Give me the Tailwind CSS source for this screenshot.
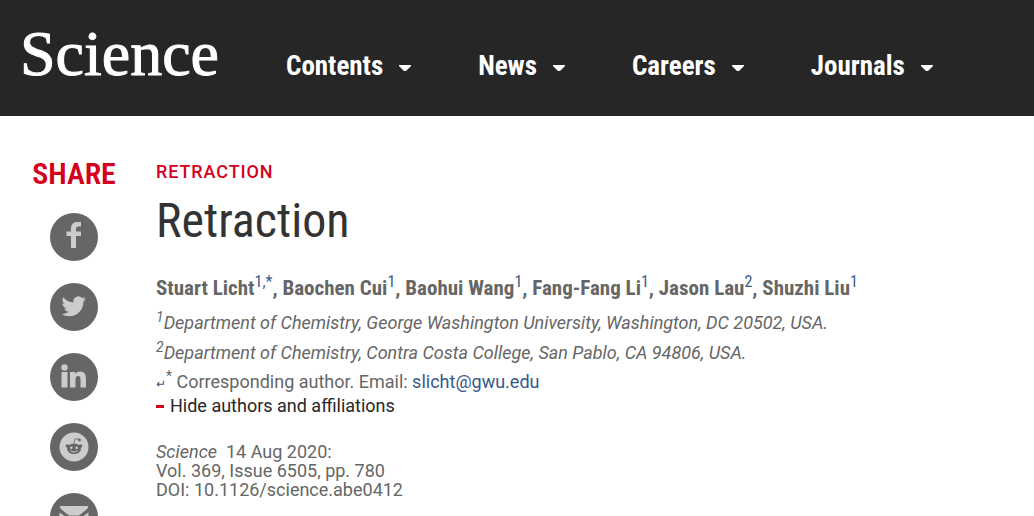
<!DOCTYPE html>
<html lang="en">
<head>
  <meta charset="UTF-8">
  <title>Retraction | Science</title>
  <meta name="viewport" content="width=device-width, initial-scale=1.0">
  <script src="https://cdn.jsdelivr.net/npm/@tailwindcss/browser@4"></script>
</head>
<body class="bg-white font-['Roboto',sans-serif] text-[#666] overflow-x-hidden">

<!-- Header -->
<header class="bg-[#262626] text-white flex items-start pl-5 pb-6">
  <a href="#" class="shrink-0 w-[266px] pt-4 font-['Liberation_Serif',serif] text-[64px] leading-[76px] [-webkit-text-stroke:1px_white]">Science</a>
  <nav class="flex gap-[67px] pt-12 font-['Roboto_Condensed','Roboto',sans-serif] text-[27px] leading-9 font-bold">
    <button class="flex items-center gap-4">Contents
      <svg class="w-3 h-2 mt-1" viewBox="0 0 12 8" fill="currentColor"><path d="M0 1h12v1L7 7H5L0 2z"/></svg>
    </button>
    <button class="flex items-center gap-4">News
      <svg class="w-3 h-2 mt-1" viewBox="0 0 12 8" fill="currentColor"><path d="M0 1h12v1L7 7H5L0 2z"/></svg>
    </button>
    <button class="flex items-center gap-4">Careers
      <svg class="w-3 h-2 mt-1" viewBox="0 0 12 8" fill="currentColor"><path d="M0 1h12v1L7 7H5L0 2z"/></svg>
    </button>
    <button class="flex items-center gap-4">Journals
      <svg class="w-3 h-2 mt-1" viewBox="0 0 12 8" fill="currentColor"><path d="M0 1h12v1L7 7H5L0 2z"/></svg>
    </button>
  </nav>
</header>

<div class="flex">

  <!-- Share links -->
  <aside class="shrink-0 w-[148px] h-[400px] overflow-hidden pt-10 flex flex-col items-center gap-[22px]">
    <h2 class="font-['Roboto_Condensed','Roboto',sans-serif] text-[30px] leading-9 -mb-[1px] font-semibold text-[#d5001c]">SHARE</h2>
    <a href="#" aria-label="Facebook" class="shrink-0 w-12 h-12 rounded-full bg-[#666] text-[#ccc]">
      <svg class="w-12 h-12" viewBox="0 0 48 48" fill="currentColor"><path d="M31 9v4.500h-2.500c-1.800 0-2.500.8-2.500 2.300V18.500h5V23h-5v12h-5V23h-4.500v-4.500H21v-3.100C21 11.200 23.400 9 27.200 9z"/></svg>
    </a>
    <a href="#" aria-label="Twitter" class="shrink-0 w-12 h-12 rounded-full bg-[#666] text-[#ccc]">
      <svg class="w-12 h-12" viewBox="0 0 48 48" fill="currentColor"><path transform="translate(11.500 11) scale(1.020)" d="M23.950 4.570a10 10 0 0 1-2.820.770 4.960 4.960 0 0 0 2.160-2.720c-.95.550-2 .96-3.130 1.180a4.920 4.920 0 0 0-8.380 4.480C7.690 8.090 4.070 6.130 1.640 3.160a4.820 4.820 0 0 0-.67 2.470c0 1.710.87 3.210 2.190 4.100a4.900 4.900 0 0 1-2.230-.62v.06a4.920 4.920 0 0 0 3.950 4.830 5 5 0 0 1-2.210.08 4.940 4.940 0 0 0 4.600 3.420A9.870 9.870 0 0 1 0 19.540a13.990 13.990 0 0 0 7.550 2.210c9.050 0 14-7.500 14-13.980 0-.21 0-.42-.02-.63a9.940 9.940 0 0 0 2.460-2.550z"/></svg>
    </a>
    <a href="#" aria-label="LinkedIn" class="shrink-0 w-12 h-12 rounded-full bg-[#666] text-[#ccc]">
      <svg class="w-12 h-12" viewBox="0 0 48 48" fill="currentColor"><circle cx="14.500" cy="14.500" r="3.200"/><path d="M11.500 19h6v15.500h-6zM20 19h5.200v2.200c.8-1.500 2.300-2.700 4.800-2.700 4.800 0 6 3 6 7.500v8.500h-5.500V27c0-2.500-.4-4-2.400-4-2 0-2.600 1.500-2.600 4v7.500H20z"/></svg>
    </a>
    <a href="#" aria-label="Reddit" class="shrink-0 w-12 h-12 rounded-full bg-[#666] text-[#ccc]">
      <svg class="w-12 h-12" viewBox="0 0 48 48" fill="none">
        <circle cx="24" cy="24" r="14.500" fill="#ccc"/>
        <g fill="#666">
          <ellipse cx="24" cy="25.800" rx="7" ry="5.200"/>
          <circle cx="17.500" cy="23" r="1.800"/><circle cx="30.500" cy="23" r="1.800"/><circle cx="29.500" cy="17" r="1.400"/>
        </g>
        <path d="M24 20.500l1-5 4 1" stroke="#666" stroke-width=".8"/>
        <circle cx="21.300" cy="24.800" r="1.300" fill="#ccc"/><circle cx="26.700" cy="24.800" r="1.300" fill="#ccc"/>
        <path d="M20.800 27.800c2 1.700 4.400 1.700 6.400 0" stroke="#ccc" stroke-linecap="round"/>
      </svg>
    </a>
    <a href="#" aria-label="Email" class="shrink-0 w-12 h-12 rounded-full bg-[#666] text-[#ccc]">
      <svg class="w-12 h-12" viewBox="0 0 48 48" fill="currentColor"><path d="M11 13h26q1.500 0 1 1.500-.5 1.500-3 3.200L29 22.500H19l-6-4.800q-2.500-1.700-3-3.200-.5-1.500 1-1.500zM9.500 19.500L19 26h10l9.500-6.500V35h-29z"/></svg>
    </a>
  </aside>

  <!-- Article -->
  <main class="flex-1 pl-2 pr-6 pt-11 text-[18px]">
    <div class="leading-6 font-medium tracking-wider text-[#d5001c]">RETRACTION</div>
    <h1 class="pt-2 font-['Roboto_Condensed','Roboto',sans-serif] text-[48px] leading-[58px] text-[#333]">Retraction</h1>

    <p class="pt-[22px] font-['Roboto_Condensed','Roboto',sans-serif] text-[21px] leading-8 font-bold">Stuart Licht<sup class="text-[16px] font-normal"><a href="#" class="text-[#37588a]">1</a>,<a href="#" class="text-[#37588a]">*</a></sup>, Baochen Cui<sup class="text-[16px] font-normal"><a href="#" class="text-[#37588a]">1</a></sup>, Baohui Wang<sup class="text-[16px] font-normal"><a href="#" class="text-[#37588a]">1</a></sup>, Fang-Fang Li<sup class="text-[16px] font-normal"><a href="#" class="text-[#37588a]">1</a></sup>, Jason Lau<sup class="text-[16px] font-normal"><a href="#" class="text-[#37588a]">2</a></sup>, Shuzhi Liu<sup class="text-[16px] font-normal"><a href="#" class="text-[#37588a]">1</a></sup></p>

    <address class="pt-1 leading-[30px]">
      <div><sup class="text-[14px]">1</sup>Department of Chemistry, George Washington University, Washington, DC 20502, USA.</div>
      <div><sup class="text-[14px]">2</sup>Department of Chemistry, Contra Costa College, San Pablo, CA 94806, USA.</div>
    </address>
    <div class="leading-7"><a href="#" class="text-[12px] text-[#37588a]">↵</a><sup class="text-[14px]">*</sup> Corresponding author. Email: <a href="#" class="text-[#37588a]">slicht@gwu.edu</a></div>
    <button class="flex items-center gap-[6px] leading-4 text-[#262626]"><span class="w-2 h-[3px] bg-[#d5001c]"></span>Hide authors and affiliations</button>

    <p class="pt-7 leading-[19px]">
      <i>Science</i>&nbsp; 14 Aug 2020:<br>
      Vol. 369, Issue 6505, pp. 780<br>
      DOI: 10.1126/science.abe0412
    </p>
  </main>
</div>

</body>
</html>
